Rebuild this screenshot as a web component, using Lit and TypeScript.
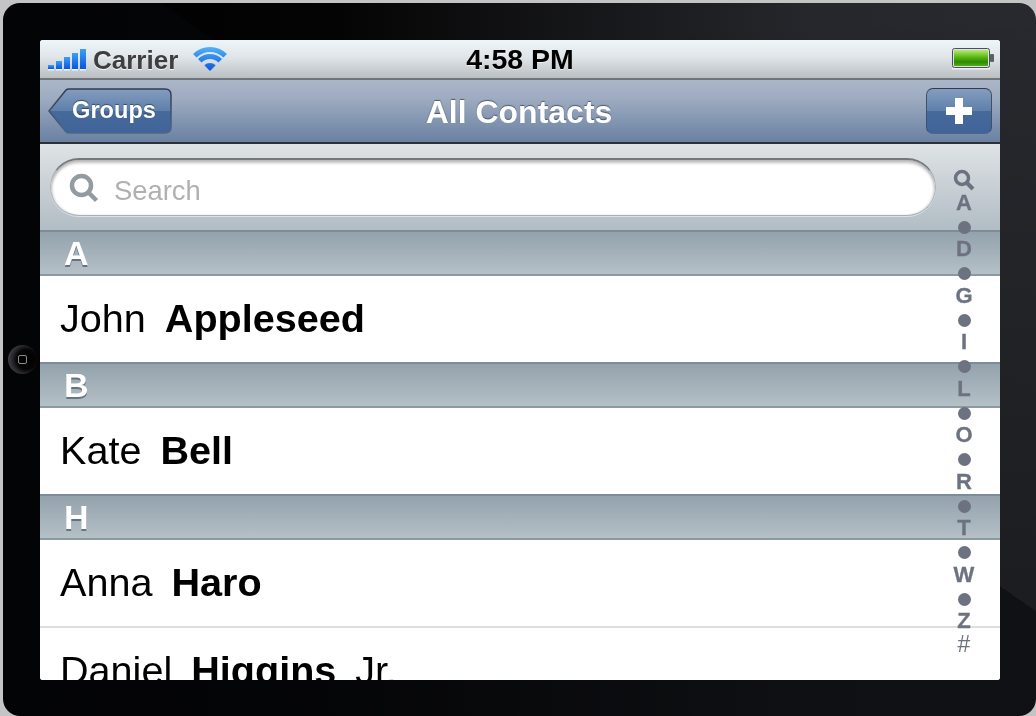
import { LitElement, html, css, svg, unsafeCSS } from "lit";
import { customElement } from "lit/decorators.js";

const FONT = unsafeCSS('"Liberation Sans", Arial, sans-serif');

const sections = [
  { letter: "A", rows: [[["John", 0], ["Appleseed", 1]]] },
  { letter: "B", rows: [[["Kate", 0], ["Bell", 1]]] },
  {
    letter: "H",
    rows: [
      [["Anna", 0], ["Haro", 1]],
      [["Daniel", 0], ["Higgins", 1], ["Jr.", 0]],
    ],
  },
];

const indexItems = ["search", "A", "•", "D", "•", "G", "•", "I", "•", "L", "•", "O", "•", "R", "•", "T", "•", "W", "•", "Z", "#"];

@customElement("app-root")
export class AppRoot extends LitElement {
  static styles = css`
    :host { display: block; width: 1036px; height: 716px; overflow: hidden; background: #c4c4c4; font-family: ${FONT}; }
    .frame {
      position: relative; box-sizing: border-box; width: 1033px; height: 713px; margin: 3px 0 0 3px; padding: 37px 0 0 37px;
      border-radius: 17px;
      background:
        linear-gradient(214.8deg, transparent 42.5%, rgba(6, 7, 10, 0.55) 42.5%),
        linear-gradient(to bottom, transparent 0, rgba(0, 0, 0, 0.3) 85%),
        linear-gradient(to right, #000 0, #040404 32%, #26272c 78%, #28292e 100%);
    }
    .home {
      position: absolute; left: 5px; top: 342px; width: 29px; height: 29px; border-radius: 50%;
      background: radial-gradient(circle at 64% 50%, #000 0, #050505 42%, #2a2a2e 62%, #5a5a5e 100%); display: flex; align-items: center; justify-content: center;
    }
    .home i { display: block; box-sizing: border-box; width: 9px; height: 9px; border: 1px solid #8b8b8f; border-radius: 2px; }
    .screen { position: relative; width: 960px; height: 640px; overflow: hidden; border-radius: 3px; background: #fff; filter: blur(0.3px); }
    .status {
      box-sizing: border-box; height: 40px; display: flex; align-items: center; padding: 0 6px 2px 8px; position: relative;
      background: linear-gradient(#eff6f9 0, #dfe5e8 45%, #b9bfc2 100%); border-bottom: 2px solid #6f7579;
    }
    .bars { display: block; width: 40px; height: 22px; margin-top: 4px; }
    .carrier { font-size: 26px; font-weight: 700; color: #3e3e40; margin: 4px 0 0 5px; text-shadow: 0 1px 0 rgba(255,255,255,.8); line-height: 1; }
    .wifi { display: block; width: 34px; height: 26px; margin-left: 15px; margin-top: 2px; }
    .time { position: absolute; left: 0; right: 0; top: 3px; text-align: center; font-size: 28.5px; font-weight: 700; color: #000; line-height: 33px; text-shadow: 0 1px 0 rgba(255,255,255,.6); }
    .battery { display: block; width: 42px; height: 22px; margin-left: auto; margin-top: 2px; }
    .nav {
      box-sizing: border-box; height: 64px; padding: 8px 8px 0; display: flex; justify-content: space-between; align-items: flex-start; position: relative;
      background: linear-gradient(#abb7c9 0, #9eabc0 30%, #7f93af 70%, #6a81a2 100%); border-bottom: 2px solid #2c3138;
    }
    .nav-title { position: absolute; left: 0; right: 2px; top: 12px; text-align: center; font-size: 32px; font-weight: 700; color: #fff; line-height: 40px; text-shadow: 0 -1px 1px rgba(40,50,70,.65); }
    .back { position: relative; width: 124px; height: 46px; display: flex; align-items: center; justify-content: center; }
    .back svg { position: absolute; inset: 0; width: 124px; height: 46px; }
    .back span { position: relative; font-size: 23.6px; font-weight: 700; color: #fff; padding-left: 8px; margin-top: -1px; text-shadow: 0 -1px 1px rgba(30,45,70,.7); }
    .add {
      box-sizing: border-box; width: 66px; height: 46px; border-radius: 7px; border: 1.5px solid; border-color: #2f3c52 #3f5069 #4f6583; display: flex; align-items: center; justify-content: center;
      background: linear-gradient(#849dbf 0, #5f80aa 49%, #476a9c 50%, #40639a 100%);
    }
    .add svg { display: block; width: 26px; height: 26px; }
    .searchbar {
      box-sizing: border-box; height: 86px; padding: 14px 64px 0 10px;
      background: linear-gradient(#dfe3e6 0, #b1bcc4 100%);
    }
    .field {
      box-sizing: border-box; height: 58px; border-radius: 29px; background: #fff; display: flex; align-items: center; padding-left: 18px;
      border: 1px solid #a9afb4; border-top: 2px solid #74787b;
      box-shadow: inset 0 3px 3px rgba(0,0,0,.25), inset 2px 0 2px rgba(0,0,0,.08), inset -2px 0 2px rgba(0,0,0,.08), 0 1px 0 rgba(255,255,255,.5);
    }
    .field svg { display: block; width: 30px; height: 30px; }
    .field span { font-size: 27.4px; line-height: 32px; color: #b0b0b0; margin: 6px 0 0 15px; }
    .head {
      box-sizing: border-box; height: 46px; padding-left: 24px; display: flex; align-items: center;
      border-top: 2px solid #7d8c97; border-bottom: 2px solid #8b99a3;
      background: linear-gradient(#93a2ac 0, #b5c0c7 100%);
      font-size: 34px; font-weight: 700; color: #fff; text-shadow: 0 2px 0 rgba(60,70,80,.6); line-height: 1;
    }
    .row { box-sizing: border-box; height: 86px; padding: 0 0 2px 20px; display: flex; align-items: center; gap: 19px; font-size: 39.6px; color: #000; background: #fff; }
    .row.sep { height: 88px; border-bottom: 2px solid #dedede; }
    .row b { font-weight: 700; }
    .index { position: absolute; right: 16px; top: 128px; width: 40px; display: flex; flex-direction: column; align-items: center; font-size: 22px; font-weight: 700; color: #6c7280; -webkit-text-stroke: 0.3px #6c7280; }
    .ix { height: 23.25px; display: flex; align-items: center; justify-content: center; line-height: 1; }
    .ix.hash { font-weight: 400; font-size: 23px; -webkit-text-stroke: 0; }
    .ix i { display: block; width: 13px; height: 13px; margin-top: 2px; border-radius: 50%; background: #6c7280; }
    .ix svg { display: block; width: 22px; height: 22px; }
  `;

  render() {
    return html`
      <div class="frame">
        <div class="home"><i></i></div>
        <div class="screen">
          <div class="status">
            <svg class="bars" viewBox="0 0 40 22">
              <defs><linearGradient id="bar" x1="0" y1="0" x2="0" y2="1"><stop offset="0" stop-color="#3aa0f4"/><stop offset="1" stop-color="#0a55e0"/></linearGradient></defs>
              ${[[0, 16], [8, 12], [16, 8], [24, 4], [32, 0]].map(
                ([x, y]) => svg`<rect x=${x} y=${y} width="6" height=${20 - y} fill="url(#bar)"/><rect x=${x} y="20" width="6" height="1.5" fill="#fff" opacity=".8"/>`
              )}
            </svg>
            <span class="carrier">Carrier</span>
            <svg class="wifi" viewBox="0 0 34 26">
              <defs><linearGradient id="wf" gradientUnits="userSpaceOnUse" x1="0" y1="2" x2="0" y2="25"><stop offset="0" stop-color="#4db0f6"/><stop offset="1" stop-color="#0b55e0"/></linearGradient></defs>
              <path d="M1.800 9.800 A21.500 21.500 0 0 1 32.200 9.800" fill="none" stroke="url(#wf)" stroke-width="5"/>
              <path d="M6.750 14.750 A14.500 14.500 0 0 1 27.250 14.750" fill="none" stroke="url(#wf)" stroke-width="5"/>
              <path d="M17 25 L11.300 19.300 A8 8 0 0 1 22.700 19.300 Z" fill="url(#wf)"/>
            </svg>
            <span class="time">4:58 PM</span>
            <svg class="battery" viewBox="0 0 42 22">
              <defs><linearGradient id="bat" x1="0" y1="0" x2="0" y2="1"><stop offset="0" stop-color="#b9e87a"/><stop offset=".45" stop-color="#58b80e"/><stop offset=".75" stop-color="#2c8a05"/><stop offset="1" stop-color="#55ab18"/></linearGradient></defs>
              <rect x="0.500" y="0.500" width="37" height="19" rx="2" fill="#dde2e4" stroke="#4a4f58"/>
              <rect x="2" y="2" width="34" height="16" fill="url(#bat)"/>
              <rect x="38" y="6" width="4" height="8" rx="1" fill="#5a6069"/>
              <rect x="0" y="20" width="38" height="1.5" fill="#fff" opacity=".7"/>
            </svg>
          </div>
          <div class="nav">
            <div class="back">
              <svg viewBox="0 0 124 46">
                <defs>
                  <linearGradient id="bk" x1="0" y1="0" x2="0" y2="1"><stop offset="0" stop-color="#849dbf"/><stop offset=".49" stop-color="#5f80aa"/><stop offset=".5" stop-color="#476a9c"/><stop offset="1" stop-color="#40639a"/></linearGradient>
                  <linearGradient id="bks" x1="0" y1="0" x2="0" y2="1"><stop offset="0" stop-color="#2f3c52"/><stop offset="1" stop-color="#4f6583"/></linearGradient>
                </defs>
                <path d="M1 23 L18 2 Q19 1 21 1 H117 Q123 1 123 7 V39 Q123 45 117 45 H21 Q19 45 18 44 Z" fill="url(#bk)" stroke="url(#bks)" stroke-width="1.500"/>
              </svg>
              <span>Groups</span>
            </div>
            <div class="nav-title">All Contacts</div>
            <div class="add">
              <svg viewBox="0 0 26 26"><path d="M9 0 H17 V9 H26 V17 H17 V26 H9 V17 H0 V9 H9 Z" fill="#fff"/></svg>
            </div>
          </div>
          <div class="searchbar">
            <div class="field">
              <svg viewBox="0 0 30 30"><circle cx="12.500" cy="12.500" r="9.500" fill="none" stroke="#929aa2" stroke-width="4.500"/><path d="M19.500 19.500 L27.500 27.500" stroke="#929aa2" stroke-width="4.500"/></svg>
              <span>Search</span>
            </div>
          </div>
          ${sections.map(
            (s) => html`
              <div class="head">${s.letter}</div>
              ${s.rows.map(
                (r, i) => html`<div class="row ${i === 0 && s.rows.length > 1 ? "sep" : ""}">
                  ${r.map(([t, b]) => (b ? html`<b>${t}</b>` : html`<span>${t}</span>`))}
                </div>`
              )}
            `
          )}
          <div class="index">
            ${indexItems.map((it) =>
              it === "search"
                ? html`<div class="ix"><svg viewBox="0 0 22 22"><circle cx="9" cy="9" r="6.500" fill="none" stroke="#6c7280" stroke-width="3.500"/><path d="M13.500 13.500 L20 20" stroke="#6c7280" stroke-width="4"/></svg></div>`
                : it === "•"
                ? html`<div class="ix"><i></i></div>`
                : html`<div class="ix ${it === "#" ? "hash" : ""}">${it}</div>`
            )}
          </div>
        </div>
      </div>
    `;
  }
}
